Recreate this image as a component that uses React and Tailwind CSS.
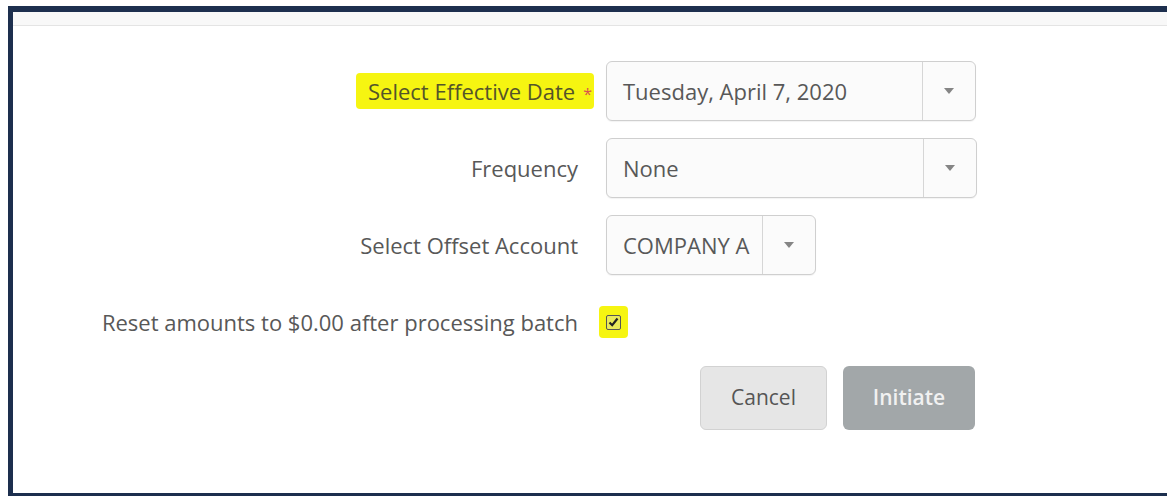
import { useState } from 'react';

const font = { fontFamily: '"Open Sans", "Noto Sans", Arial, sans-serif' };

const Caret = () => (
  <svg width="10" height="6" viewBox="0 0 10 6" className="text-[#858585]">
    <path d="M0 0 H10 L5 6 Z" fill="currentColor" />
  </svg>
);

const Dropdown = ({ value, width }) => (
  <div
    className={`flex h-[60px] ${width} items-stretch rounded-[6px] border border-[#cfcfcf] bg-[#fbfbfb] shadow-[0_1px_1px_rgba(0,0,0,0.05)]`}
  >
    <div className="flex flex-1 items-center pl-[16px] text-[22px] text-[#585858]">{value}</div>
    <div className="flex w-[53px] items-center justify-center border-l border-[#d6d6d6]">
      <Caret />
    </div>
  </div>
);

const Row = ({ label, children }) => (
  <div className="flex h-[60px] items-center">
    <div className="w-[565px] shrink-0 text-right text-[22px] text-[#585858]">{label}</div>
    <div className="ml-[28px] flex items-center">{children}</div>
  </div>
);

export default function App() {
  const [reset, setReset] = useState(true);

  return (
    <div className="h-[496px] w-[1167px] overflow-hidden bg-white pl-[8px] pt-[6px]" style={font}>
      <div className="flex h-[490px] flex-col border-b-[3px] border-l-[5px] border-t-[6px] border-[#1d2f4e] bg-white">
        <div className="h-[14px] border-b border-[#e4e4e4] bg-[#f8f8f8]" />

        <div className="mt-[35px] flex flex-col gap-[17px]">
          <Row
            label={
              <span className="-mr-[16px] rounded-[4px] bg-[#f6f511] py-[3px] pl-[12px] pr-[2px] text-[#54542a]">
                Select Effective Date
                <span className="ml-[8px] text-[16px] text-[#d9534f]">*</span>
              </span>
            }
          >
            <Dropdown value="Tuesday, April 7, 2020" width="w-[370px]" />
          </Row>

          <Row label="Frequency">
            <Dropdown value="None" width="w-[371px]" />
          </Row>

          <Row label="Select Offset Account">
            <Dropdown value="COMPANY A" width="w-[210px]" />
          </Row>

          <Row label="Reset amounts to $0.00 after processing batch">
            <div className="-ml-[7px] flex h-[32px] w-[29px] items-center justify-center rounded-[4px] bg-[#f6f511]">
              <button
                onClick={() => setReset(!reset)}
                className="flex h-[15px] w-[15px] items-center justify-center rounded-[2px] border border-[#555] bg-[#e9e95a]"
              >
                {reset && (
                  <svg width="11" height="10" viewBox="0 0 11 10">
                    <path d="M1.5 5.5 L4.2 8.2 L9.5 1.5" stroke="#222" strokeWidth="2.2" fill="none" />
                  </svg>
                )}
              </button>
            </div>
          </Row>

          <div className="-mt-[3px] ml-[687px] flex gap-[16px]">
            <button className="h-[64px] w-[127px] rounded-[6px] border border-[#d2d2d2] bg-[#e6e6e6] text-[21px] text-[#555]">
              Cancel
            </button>
            <button className="h-[64px] w-[132px] rounded-[6px] bg-[#a2a7a9] text-[21px] font-semibold text-[#f1f1f1]">
              Initiate
            </button>
          </div>
        </div>
      </div>
    </div>
  );
}
